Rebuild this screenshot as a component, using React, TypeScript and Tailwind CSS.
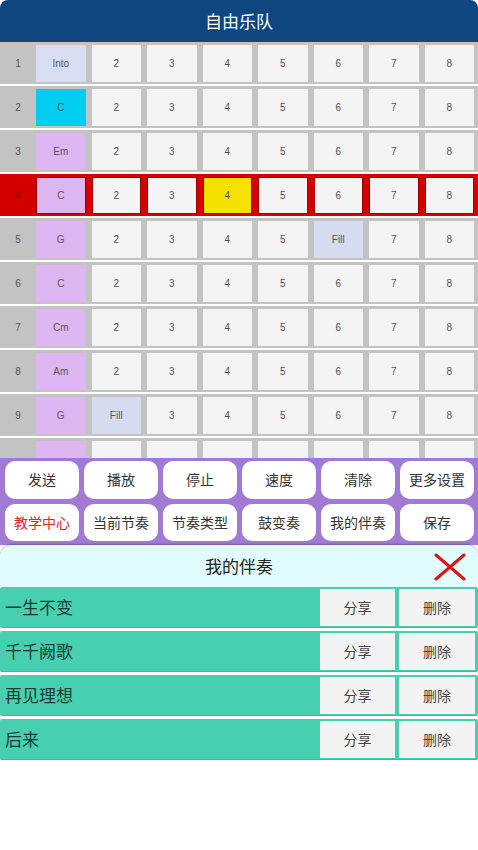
import React from 'react';

type Cell = { label: string; color?: string };

const PLAIN = 'bg-[#f4f4f4]';
const CHORD = 'bg-[#ddb6f2]';
const FILL = 'bg-[#d5dcef]';

const rows: { n: string; chord: string; chordColor: string; active?: boolean }[] = [
  { n: '1', chord: 'Into', chordColor: 'bg-[#d9ddf1]' },
  { n: '2', chord: 'C', chordColor: 'bg-[#00cdf0]' },
  { n: '3', chord: 'Em', chordColor: CHORD },
  { n: '4', chord: 'C', chordColor: CHORD, active: true },
  { n: '5', chord: 'G', chordColor: CHORD },
  { n: '6', chord: 'C', chordColor: CHORD },
  { n: '7', chord: 'Cm', chordColor: CHORD },
  { n: '8', chord: 'Am', chordColor: CHORD },
  { n: '9', chord: 'G', chordColor: CHORD },
  { n: '10', chord: '', chordColor: CHORD },
];

function cellsFor(n: string): Cell[] {
  const base: Cell[] = ['2', '3', '4', '5', '6', '7', '8'].map((l) => ({ label: l, color: PLAIN }));
  if (n === '4') base[2] = { label: '4', color: 'bg-[#f5e000]' };
  if (n === '5') base[4] = { label: 'Fill', color: FILL };
  if (n === '9') base[0] = { label: 'Fill', color: FILL };
  if (n === '10') return base.map(() => ({ label: '', color: PLAIN }));
  return base;
}

const buttons = ['发送', '播放', '停止', '速度', '清除', '更多设置', '教学中心', '当前节奏', '节奏类型', '鼓变奏', '我的伴奏', '保存'];
const songs = ['一生不变', '千千阙歌', '再见理想', '后来'];

export default function App() {
  return (
    <div className="w-[478px] h-[850px] flex flex-col overflow-hidden bg-white font-['Liberation_Sans','Noto_Sans_CJK_SC',sans-serif]">
      <header className="h-[42px] shrink-0 bg-[#0e467f] rounded-t-[8px] flex items-center justify-center">
        <span className="text-white text-[17px] font-['Noto_Sans_CJK_SC',sans-serif]">自由乐队</span>
      </header>

      <div className="h-[416px] shrink-0 overflow-hidden">
        {rows.map((r) => (
          <div
            key={r.n}
            className={`h-[44px] flex items-center border-b-2 border-white pr-[4px] ${r.active ? 'bg-[#d40000]' : 'bg-[#c3c3c3]'}`}
          >
            <div className={`w-[36px] shrink-0 text-center text-[10px] ${r.active ? 'text-[#8a0000]' : 'text-[#555]'}`}>
              {r.n === '10' ? '' : r.n}
            </div>
            <div className="flex-1 grid grid-cols-8 gap-[6px]">
              <div
                className={`h-[37px] flex items-center justify-center text-[10px] text-[#555] ${r.chordColor} ${r.active ? 'border border-[#a00000]' : ''}`}
              >
                {r.chord}
              </div>
              {cellsFor(r.n).map((c, i) => (
                <div
                  key={i}
                  className={`h-[37px] flex items-center justify-center text-[10px] text-[#555] ${c.color} ${r.active ? 'border border-[#a00000]' : ''}`}
                >
                  {c.label}
                </div>
              ))}
            </div>
          </div>
        ))}
      </div>

      <div className="h-[87px] shrink-0 bg-[#a17bd3] pt-[3px] pb-[4px] pl-[5px] pr-[4px] grid grid-cols-6 gap-x-[5px] gap-y-[5px] font-['Noto_Sans_CJK_SC',sans-serif]">
        {buttons.map((b) => (
          <button
            key={b}
            className={`bg-white rounded-[10px] text-[14px] flex items-center justify-center ${b === '教学中心' ? 'text-[#e02424]' : 'text-[#333]'}`}
          >
            {b}
          </button>
        ))}
      </div>

      <div className="flex-1 flex flex-col bg-white rounded-t-[12px] shadow-[0_-1px_2px_rgba(0,0,0,0.3)] font-['Noto_Sans_CJK_SC',sans-serif]">
        <div className="h-[42px] shrink-0 bg-[#e0fcfc] rounded-t-[12px] relative flex items-center justify-center">
          <span className="text-[17px] text-[#222]">我的伴奏</span>
          <svg className="absolute right-[12px] top-[8px]" width="32" height="28" viewBox="0 0 32 28">
            <path d="M2 2 L30 26 M30 2 L2 26" stroke="#e01414" strokeWidth="3" strokeLinecap="round" />
          </svg>
        </div>
        {songs.map((s) => (
          <div
            key={s}
            className="h-[41px] mb-[3px] bg-[#47d0b0] border-b border-[#3db99c] rounded-[2px] flex items-center pl-[5px] pr-[3px]"
          >
            <span className="flex-1 text-[17px] text-[#1c3b33]">{s}</span>
            <div className="flex gap-[4px] h-[37px]">
              <button className="w-[75px] bg-[#f3f3f3] text-[14px] text-[#444]">分享</button>
              <button className="w-[76px] bg-[#f3f3f3] text-[14px] text-[#444]">删除</button>
            </div>
          </div>
        ))}
      </div>
    </div>
  );
}
